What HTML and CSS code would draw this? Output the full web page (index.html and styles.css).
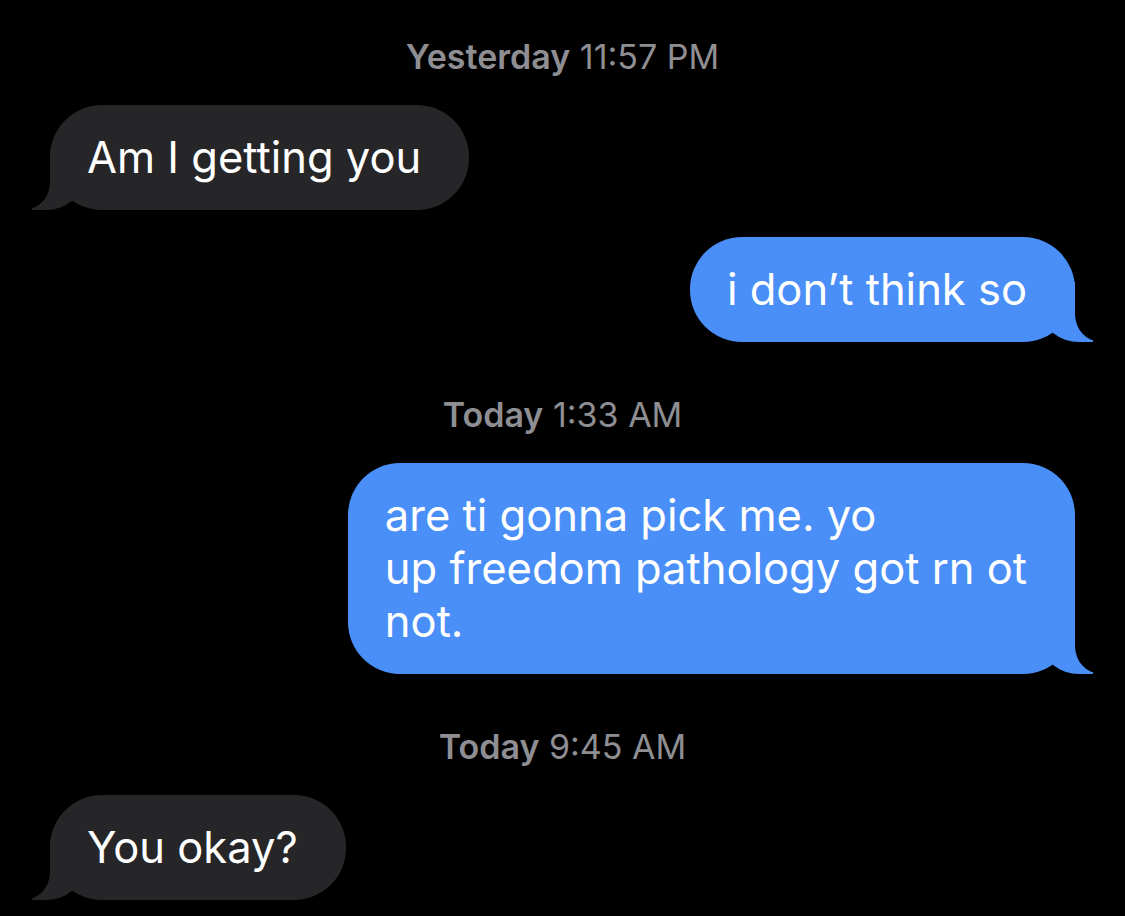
FILE: index.html
```html
<!DOCTYPE html>
<html>
  <head>
    <meta charset="UTF-8">
    <meta name="viewport" content="width=device-width, initial-scale=1.0">
    <title>Messages</title>
    <link rel="stylesheet" href="styles.css">
  </head>
  <body>
    <div class="thread">
      <!-- yesterday -->
      <div class="stamp first"><b>Yesterday</b> 11:57 PM</div>
      <div class="bubble them">Am I getting you</div>
      <div class="bubble me">i don’t think so</div>

      <!-- today -->
      <div class="stamp"><b>Today</b> 1:33 AM</div>
      <div class="bubble me">are ti gonna pick me. yo<br>up freedom pathology got rn ot<br>not.</div>

      <div class="stamp"><b>Today</b> 9:45 AM</div>
      <div class="bubble them">You okay?</div>
    </div>
  </body>
</html>
```

FILE: styles.css
```css
body {
  margin: 0;
  background: #000;
  font-family: Inter, "Noto Sans", sans-serif;
  color: #fff;
}

.thread {
  display: flex;
  flex-direction: column;
  gap: 27px;
  padding: 37px 50px 0 50px;
  height: 879px;
  overflow: hidden;
}

.stamp {
  text-align: center;
  font-size: 34px;
  line-height: 40px;
  color: #8e8e93;
  margin-top: 26px;
  margin-bottom: 1px;
}

.stamp.first {
  margin-top: 0;
}

.stamp b {
  font-weight: 600;
}

.bubble {
  position: relative;
  max-width: 700px;
  padding: 26px 48px 26px 37px;
  font-size: 43.5px;
  line-height: 53px;
  border-radius: 52px;
}

.them {
  align-self: flex-start;
  background: #262629;
}

.me {
  align-self: flex-end;
  background: #4a8ff8;
}

/* tails */
.bubble::before,
.bubble::after {
  content: "";
  position: absolute;
  bottom: 0;
  height: 60px;
}

.them::before {
  left: -18px;
  width: 50px;
  background: #262629;
  border-bottom-right-radius: 36px 30px;
}

.them::after {
  left: -70px;
  width: 70px;
  background: #000;
  border-bottom-right-radius: 26px 28px;
}

.me::before {
  right: -18px;
  width: 50px;
  background: #4a8ff8;
  border-bottom-left-radius: 36px 30px;
}

.me::after {
  right: -70px;
  width: 70px;
  background: #000;
  border-bottom-left-radius: 26px 28px;
}
```
